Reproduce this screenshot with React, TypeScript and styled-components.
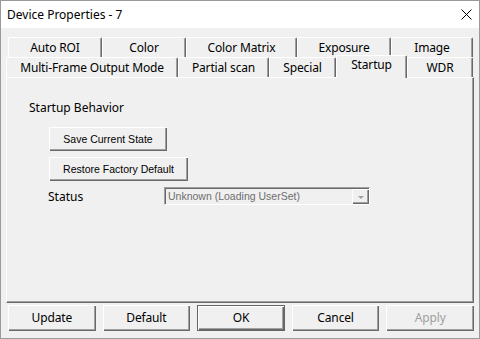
import React from "react";
import styled, { createGlobalStyle, css } from "styled-components";

const GlobalStyle = createGlobalStyle`
  html, body {
    margin: 0;
    padding: 0;
    background: #ffffff;
  }
  * {
    box-sizing: border-box;
  }
`;

const Window = styled.div`
  width: 480px;
  height: 339px;
  border: 1px solid #9a9a9a;
  display: flex;
  flex-direction: column;
  background: #f0f0f0;
  font-family: "Noto Sans", "Segoe UI", sans-serif;
  font-size: 12px;
  color: #000;
`;

const TitleBar = styled.div`
  height: 27px;
  background: #ffffff;
  display: flex;
  align-items: center;
  justify-content: space-between;
  padding: 0 7px 0 6px;
`;

const Title = styled.span`
  font-size: 12px;
  line-height: 16px;
`;

const Body = styled.div`
  flex: 1;
  display: flex;
  flex-direction: column;
  padding: 9px 5px 7px 5px;
`;

const TabRow = styled.div<{ $indent: number }>`
  display: flex;
  height: 20px;
  padding-left: ${(p) => p.$indent}px;
  position: relative;
`;

const Tab = styled.div<{ $w: number; $active?: boolean }>`
  width: ${(p) => p.$w}px;
  height: 20px;
  flex: none;
  display: flex;
  align-items: center;
  justify-content: center;
  background: #f0f0f0;
  border-top: 1px solid #ffffff;
  border-left: 1px solid #ffffff;
  border-right: 1px solid #696969;
  box-shadow: inset -1px 0 0 #a0a0a0;
  border-top-left-radius: 2px;
  border-top-right-radius: 2px;
  line-height: 16px;
  letter-spacing: -0.15px;
  white-space: nowrap;
  ${(p) =>
    p.$active &&
    css`
      position: relative;
      z-index: 2;
      height: 23px;
      margin-top: -2px;
      margin-bottom: -1px;
      padding-bottom: 5px;
    `}
`;

const Panel = styled.div`
  height: 226px;
  border-top: 1px solid #ffffff;
  border-left: 1px solid #ffffff;
  border-right: 1px solid #696969;
  border-bottom: 1px solid #696969;
  box-shadow: inset -1px -1px 0 #a0a0a0;
  display: flex;
  flex-direction: column;
  padding: 22px 0 0 22px;
`;

const SectionLabel = styled.div`
  line-height: 16px;
  height: 16px;
`;

const SmallButton = styled.button<{ $w: number }>`
  width: ${(p) => p.$w}px;
  height: 24px;
  margin-left: 20px;
  padding: 0 0 1px 0;
  background: #f0f0f0;
  border: none;
  box-shadow: inset 1px 1px 0 #ffffff, inset -1px -1px 0 #696969,
    inset -2px -2px 0 #a0a0a0;
  font-family: "Liberation Sans", Arial, sans-serif;
  font-size: 10.5px;
  color: #000;
  text-align: center;
`;

const ButtonStack = styled.div`
  display: flex;
  flex-direction: column;
  gap: 6px;
  margin-top: 11px;
`;

const StatusRow = styled.div`
  display: flex;
  align-items: center;
  margin-top: 6px;
  height: 18px;
`;

const StatusLabel = styled.span`
  width: 116px;
  margin-left: 19px;
  line-height: 16px;
  padding-top: 2px;
`;

const Combo = styled.div`
  width: 206px;
  height: 18px;
  display: flex;
  align-items: stretch;
  background: #f0f0f0;
  border-top: 1px solid #a0a0a0;
  border-left: 1px solid #a0a0a0;
  border-right: 1px solid #ffffff;
  border-bottom: 1px solid #ffffff;
  box-shadow: inset 1px 1px 0 #696969;
  padding: 1px 0 0 1px;
`;

const ComboText = styled.span`
  flex: 1;
  padding-left: 2px;
  font-family: "Liberation Sans", Arial, sans-serif;
  font-size: 10.5px;
  line-height: 14px;
  color: #6d6d6d;
  white-space: nowrap;
  overflow: hidden;
`;

const ComboArrow = styled.span`
  width: 17px;
  flex: none;
  display: flex;
  align-items: center;
  justify-content: center;
  background: #f0f0f0;
  box-shadow: inset 1px 1px 0 #ffffff, inset -1px -1px 0 #696969,
    inset -2px -2px 0 #a0a0a0;
`;

const Triangle = styled.span`
  width: 0;
  height: 0;
  border-left: 3px solid transparent;
  border-right: 3px solid transparent;
  border-top: 3px solid #a0a0a0;
  margin-top: 1px;
`;

const ButtonBar = styled.div`
  display: flex;
  gap: 7px;
  margin: 2px 0 0 2px;
`;

const DialogButton = styled.button<{ $default?: boolean; $disabled?: boolean }>`
  width: 88px;
  height: 26px;
  padding: 0 0 2px 0;
  background: #f0f0f0;
  border: none;
  font-family: "Noto Sans", "Segoe UI", sans-serif;
  font-size: 12px;
  letter-spacing: -0.15px;
  color: ${(p) => (p.$disabled ? "#a0a0a0" : "#000")};
  box-shadow: inset 1px 1px 0 #ffffff, inset -1px -1px 0 #696969,
    inset -2px -2px 0 #a0a0a0;
  ${(p) =>
    p.$default &&
    css`
      box-shadow: inset 0 0 0 1px #646464, inset 2px 2px 0 #ffffff,
        inset -2px -2px 0 #696969, inset -3px -3px 0 #a0a0a0;
    `}
`;

const CloseIcon = () => (
  <svg width="11" height="11" viewBox="0 0 11 11">
    <path d="M0.5 0.5 L10.5 10.5 M10.5 0.5 L0.5 10.5" stroke="#000" strokeWidth="1" />
  </svg>
);

const row1 = [
  { label: "Auto ROI", w: 94 },
  { label: "Color", w: 84 },
  { label: "Color Matrix", w: 111 },
  { label: "Exposure", w: 94 },
  { label: "Image", w: 82 },
];

const row2 = [
  { label: "Multi-Frame Output Mode", w: 172 },
  { label: "Partial scan", w: 91 },
  { label: "Special", w: 67 },
  { label: "Startup", w: 71, active: true },
  { label: "WDR", w: 66 },
];

const App = () => {
  return (
    <>
      <GlobalStyle />
      <Window>
        <TitleBar>
          <Title>Device Properties - 7</Title>
          <CloseIcon />
        </TitleBar>
        <Body>
          <TabRow $indent={2}>
            {row1.map((t) => (
              <Tab key={t.label} $w={t.w}>
                {t.label}
              </Tab>
            ))}
          </TabRow>
          <TabRow $indent={0}>
            {row2.map((t) => (
              <Tab key={t.label} $w={t.w} $active={t.active}>
                {t.label}
              </Tab>
            ))}
          </TabRow>
          <Panel>
            <SectionLabel>Startup Behavior</SectionLabel>
            <ButtonStack>
              <SmallButton $w={118}>Save Current State</SmallButton>
              <SmallButton $w={139}>Restore Factory Default</SmallButton>
            </ButtonStack>
            <StatusRow>
              <StatusLabel>Status</StatusLabel>
              <Combo>
                <ComboText>Unknown (Loading UserSet)</ComboText>
                <ComboArrow>
                  <Triangle />
                </ComboArrow>
              </Combo>
            </StatusRow>
          </Panel>
          <ButtonBar>
            <DialogButton>Update</DialogButton>
            <DialogButton>Default</DialogButton>
            <DialogButton $default>OK</DialogButton>
            <DialogButton>Cancel</DialogButton>
            <DialogButton $disabled>Apply</DialogButton>
          </ButtonBar>
        </Body>
      </Window>
    </>
  );
};

export default App;
